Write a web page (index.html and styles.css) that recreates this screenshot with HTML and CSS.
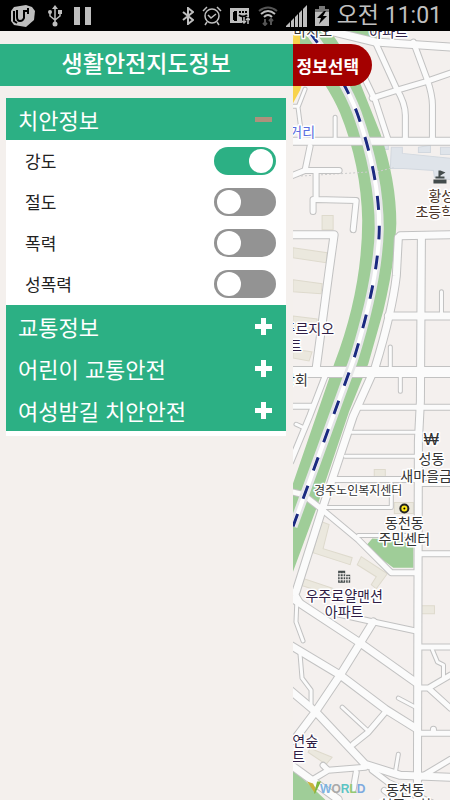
FILE: index.html
```html
<!DOCTYPE html>
<html lang="ko">
<head>
    <meta charset="UTF-8">
    <meta name="viewport" content="width=device-width, initial-scale=1">
    <title>생활안전지도정보</title>
    <link rel="stylesheet" href="styles.css">
</head>
<body>
    <header class="statusbar">
        <div class="status_left">
            <svg width="26" height="22" viewBox="0 0 26 22">
                <path class="fill" d="M4 2 16 0 22 2 25 6 24 15 16 22 4 20 1 16V6Z"/>
                <path class="cut" d="M7 5V12Q7 16 10 16T14 13V6H19M18 3V9M4 6V16L7 18"/>
            </svg>
            <svg width="14" height="22" viewBox="0 0 14 22">
                <path class="thin" d="M7 3V18M2 7V11L7 15L12 11V7"/>
                <path class="fill" d="M7 0 10 4H4ZM10 5H14V9H10Z"/>
                <circle class="fill" cx="2" cy="7" r="2"/>
                <circle class="fill" cx="7" cy="19" r="2.5"/>
            </svg>
            <svg width="18" height="18" viewBox="0 0 18 18">
                <path class="fill" d="M0 0H6V18H0ZM11 0H17V18H11Z"/>
            </svg>
        </div>
        <div class="status_right">
            <svg width="12" height="18" viewBox="0 0 12 18">
                <path class="line" d="M1 5 11 13 6 17V1L11 5 1 13"/>
            </svg>
            <svg width="20" height="20" viewBox="0 0 20 20">
                <circle class="thin" cx="10" cy="10" r="7"/>
                <path class="thin" d="M6 9 9 12 14 8M1 5 5 1M15 1 19 5M5 16 3 19M15 16 17 19"/>
            </svg>
            <svg width="20" height="18" viewBox="0 0 20 18">
                <path class="fill" d="M0 1H19V10H12V16H0Z"/>
                <path class="cut" d="M4 5V13M4 5H6V13H4M9 5H11M12 5H14M15 5H17M9 8Q13 11 17 8"/>
                <path class="thin" d="M14 10V16M12 14 14 16 16 14M18 17V11M16 13 18 11 20 13"/>
            </svg>
            <svg width="20" height="20" viewBox="0 0 20 20">
                <path class="dim" d="M1 5Q10-2 19 5"/>
                <path class="line" d="M3 8Q10 2 17 8M6 11Q10 7 14 11"/>
                <path class="dim" d="M7 13V19M5 17 7 19 9 17M13 19V13M11 15 13 13 15 15"/>
            </svg>
            <svg width="21" height="22" viewBox="0 0 21 22">
                <path class="fill" d="M0 22V21L4 17V22ZM5 22V16L8 13V22ZM9 22V12L12 9V22ZM13 22V8L16 5V22ZM17 22V4L21 0V22Z"/>
            </svg>
            <svg width="14" height="20" viewBox="0 0 14 20">
                <path class="fill" d="M0 3H14V20H0Z"/>
                <path class="charge" d="M4 0H10V3H14V6H0V3H4Z"/>
                <path d="M9 5 2 12H6L4 18 12 10H8L11 5Z"/>
            </svg>
            <span class="clock">오전 11:01</span>
        </div>
    </header>

    <main class="screen">
        <aside class="panel">
            <h1 class="title">생활안전지도정보</h1>
            <div class="accordion">
                <button class="group" type="button" aria-expanded="true">치안정보
                    <svg class="minus" width="17" height="17" viewBox="0 0 17 17"><path d="M0 6H17V11H0Z"/></svg>
                </button>
                <ul class="list">
                    <li class="item"><label for="robbery">강도</label><input class="switch" id="robbery" type="checkbox" checked></li>
                    <li class="item"><label for="theft">절도</label><input class="switch" id="theft" type="checkbox"></li>
                    <li class="item"><label for="violence">폭력</label><input class="switch" id="violence" type="checkbox"></li>
                    <li class="item"><label for="sexual">성폭력</label><input class="switch" id="sexual" type="checkbox"></li>
                </ul>
                <button class="group" type="button" aria-expanded="false">교통정보
                    <svg class="plus" width="17" height="17" viewBox="0 0 17 17"><path d="M6 0H11V6H17V11H11V17H6V11H0V6H6Z"/></svg>
                </button>
                <button class="group" type="button" aria-expanded="false">어린이 교통안전
                    <svg class="plus" width="17" height="17" viewBox="0 0 17 17"><path d="M6 0H11V6H17V11H11V17H6V11H0V6H6Z"/></svg>
                </button>
                <button class="group" type="button" aria-expanded="false">여성밤길 치안안전
                    <svg class="plus" width="17" height="17" viewBox="0 0 17 17"><path d="M6 0H11V6H17V11H11V17H6V11H0V6H6Z"/></svg>
                </button>
            </div>
        </aside>

        <section class="mapview">
            <svg class="map" viewBox="293 31 157 769" preserveAspectRatio="xMinYMin slice">
                <defs>
                    <g id="roads">
                        <!-- north -->
                        <path class="r8" d="M330 31 375 42 450 47M388 315H450M450 234 400 235"/>
                        <path class="r6" d="M375 42 396 88Q405 103 405 115V140M413 42 427 80Q432 95 432 105V140M372 98 397 90 424 82 450 73M362 73 375 100 388 140"/>
                        <path class="r8" d="M293 141H450"/>
                        <path class="r4" d="M305 89 298 107 302 138M290 106H298M335 117V138"/>
                        <path class="r6" d="M310 146 305 170 290 176M305 170H339M316 172V199L356 200 353 229M313 199V211"/>
                        <path class="r8" d="M290 234H334L329 270 316 368"/>
                        <path class="r8" d="M398 237 396 275Q392 310 375 366L353 415 338 460 322 508 296 590"/>
                        <path class="r8" d="M421 236 420 400 418 440 417 800"/>
                        <path class="r4" d="M441 291V312M390 346V368M400 373V390"/>
                        <!-- middle -->
                        <path class="r10" d="M290 371H450"/>
                        <path class="r6" d="M290 405H313M325 375 310 414 291 460M358 406H450M335 478H417M420 482H450M420 552H450"/>
                        <path class="r4" d="M296 423 305 427M352 431H415M345 455H415M326 506H391M391 482V506M358 534H415"/>
                        <path class="r6" d="M290 490 303 493 322 508 358 538 391 571H415"/>
                        <!-- south -->
                        <path class="r4" d="M297 596 296 620 303 639M300 652 302 676 311 688V705M342 705 368 729M398 696 415 705M398 752 395 770M432 648 437 660 443 663V675"/>
                        <path class="r6" d="M294 590 300 600M328 610 373 620 415 629M385 710 368 730 353 742M323 763 328 768 365 765M328 768 313 777M356 770 353 787M372 768 388 780 435 802M384 788 400 800"/>
                        <path class="r8" d="M293 597 360 641 415 680M373 620 340 673 315 710 294 738M290 643 340 673 385 707 417 727M290 688 316 710 365 762 400 773 450 775M290 762 338 797"/>
                        <path class="r6" d="M420 645H450M417 686H428L450 673M428 686 450 706M417 731H450M433 727V731M420 775 450 757"/>
                    </g>
                </defs>

                <rect class="land" x="293" y="31" width="400" height="769"/>

                <!-- buildings -->
                <path class="house" d="M322 215H333V229H322ZM293 247 327 252 326 262 293 257ZM293 279 322 283 321 293 293 291ZM293 315 317 318V328H293ZM293 348 312 351 309 360 293 357Z"/>
                <path class="house" d="M321 520 329 523 323 547 352 556 350 563 313 551ZM361 555 387 572 376 587 371 583 376 575 357 563ZM301 576 337 588 334 594 299 583ZM374 468H385V475H374ZM394 501H413V512H394ZM420 604H434V612H420ZM310 746 332 755 326 762 308 750Z"/>
                <path class="school" d="M391 147H402V153L450 158V179L434 177 433 170 403 168H390ZM375 147 388 144V149H375ZM418 147 430 145V152H418ZM440 147H450V154H440Z"/>
                <path class="yellow" d="M293 31H304L315 45V46L300 90 293 103Z"/>
                <path class="lot" d="M350 31H379V38H350Z"/>

                <!-- green belt along the railway -->
                <path class="green" d="M300 31H330Q352 62 360 83L380 133Q396 180 396 223 395 260 383 310L368 363 349 410 317 505 293 570V482L334 363Q362 290 362 220 361 165 340 113 328 85 300 50Z"/>
                <path class="green" d="M365 545 372 537 405 539 413 545V566H393ZM293 767 328 800H293Z"/>
                <path class="path" d="M293 176 378 171 393 167"/>

                <use href="#roads" class="casing"/>
                <use href="#roads" class="surface"/>

                <path class="railbed" d="M309 31Q345 80 357 113 379 175 379 228 378 280 353 360L293 525"/>
                <path class="rail" d="M309 31Q345 80 357 113 379 175 379 228 378 280 353 360L293 525"/>
                <path class="ties" d="M309 31Q345 80 357 113 379 175 379 228 378 280 353 360L293 525"/>

                <!-- place marks -->
                <path class="mark" d="M433 179H446V183H433ZM435 176H444V178H435ZM438 170H440V177H438ZM440 170 445 172 440 175Z"/>
                <path class="mark" d="M338 569H345V581H338ZM346 573H350V581H346Z"/>
                <path class="windows" d="M340 571V580M343 571V580M338 572H345M338 575H350M338 578H350M348 574V581"/>
                <circle class="spot" cx="404" cy="507" r="4"/>
                <circle cx="404" cy="507" r="1"/>

                <g class="labels">
                    <text x="332" y="36" text-anchor="end">이마시오</text>
                    <text x="369" y="37" class="apt">아파트</text>
                    <text x="315" y="137" text-anchor="end" class="street">네거리</text>
                    <text x="428" y="200" class="brown">황성</text>
                    <text x="415" y="216" class="brown">초등학교</text>
                    <text x="334" y="333" text-anchor="end" class="apt">푸르지오</text>
                    <text x="302" y="350" text-anchor="end" class="apt">아파트</text>
                    <text x="308" y="384" text-anchor="end">상회</text>
                    <text x="431" y="444" text-anchor="middle" class="won">₩</text>
                    <text x="431" y="463" text-anchor="middle">성동</text>
                    <text x="400" y="480">새마을금고</text>
                    <text x="358" y="494" text-anchor="middle" class="small">경주노인복지센터</text>
                    <text x="404" y="526" text-anchor="middle">동천동</text>
                    <text x="404" y="542" text-anchor="middle">주민센터</text>
                    <text x="344" y="599" text-anchor="middle" class="apt">우주로얄맨션</text>
                    <text x="344" y="615" text-anchor="middle" class="apt">아파트</text>
                    <text x="318" y="744" text-anchor="end" class="apt">자연숲</text>
                    <text x="305" y="760" text-anchor="end" class="apt">아파트</text>
                    <text x="405" y="793" text-anchor="middle">동천동</text>
                    <text x="405" y="808" text-anchor="middle">천주교회</text>
                </g>

                <path class="vleft" d="M307 779 313 781 316 787 315 791Z"/>
                <path class="vright" d="M314 791 317 779H321L315 791Z"/>
                <text class="vworld" x="320" y="791">W<tspan class="o">O</tspan><tspan class="r">R</tspan><tspan class="l">L</tspan><tspan class="d">D</tspan></text>
            </svg>
            <button class="select" type="button">정보선택</button>
        </section>
    </main>
</body>
</html>
```
FILE: styles.css
```css
* {
    box-sizing: border-box;
}

body {
    margin: 0;
    min-height: 100vh;
    display: flex;
    flex-direction: column;
    background: #f4f0ed;
    font-family: "Noto Sans CJK KR", sans-serif;
}

button {
    border: 0;
    font-family: inherit;
    cursor: pointer;
}

/* status bar */
.statusbar {
    height: 31px;
    padding: 0 8px 0 10px;
    display: flex;
    justify-content: space-between;
    align-items: center;
    background: #000;
    color: #c0c0c0;
}

.status_left {
    display: flex;
    align-items: center;
    gap: 12px;
}

.status_right {
    display: flex;
    align-items: center;
    gap: 8px;
}

.clock {
    font-family: Roboto, "Noto Sans CJK KR", sans-serif;
    font-size: 23px;
    line-height: 30px;
    white-space: nowrap;
}

.fill {
    fill: #bebebe;
}

.charge {
    fill: #777;
}

.line {
    fill: none;
    stroke: #bebebe;
    stroke-width: 2;
}

.thin {
    fill: none;
    stroke: #bebebe;
    stroke-width: 1.5;
}

.cut {
    fill: none;
    stroke: #000;
    stroke-width: 2;
}

.dim {
    fill: none;
    stroke: #555;
    stroke-width: 2;
}

/* layout */
.screen {
    flex: 1;
    display: flex;
}

.panel {
    width: 65%;
    padding-top: 13px;
}

.mapview {
    flex: 1;
    position: relative;
    padding-top: 13px;
    overflow: hidden;
}

/* left panel */
.title {
    margin: 0;
    height: 42px;
    background: #2cb084;
    color: #fff;
    font-size: 23px;
    font-weight: 500;
    line-height: 36px;
    text-align: center;
}

.accordion {
    margin: 12px 7px 0 6px;
    padding-bottom: 5px;
    background: #fff;
}

.group {
    width: 100%;
    height: 42px;
    padding: 0 14px 0 12px;
    display: flex;
    justify-content: space-between;
    align-items: center;
    background: #2cb084;
    color: #fff;
    font-size: 22px;
    line-height: 42px;
}

.plus {
    fill: #fff;
}

.minus {
    fill: #ad917c;
}

.list {
    margin: 0;
    padding: 0 0 1px;
    list-style: none;
}

.item {
    height: 41px;
    padding: 0 10px 0 19px;
    display: flex;
    justify-content: space-between;
    align-items: center;
    color: #222;
    font-size: 17px;
}

.switch {
    appearance: none;
    margin: 0;
    width: 62px;
    height: 28px;
    padding: 2px 3px;
    display: flex;
    border-radius: 14px;
    background: #939393;
}

.switch::before {
    content: "";
    width: 24px;
    height: 24px;
    border-radius: 50%;
    background: #fff;
}

.switch:checked {
    justify-content: flex-end;
    background: #2cb084;
}

/* the button floats on the map */
.select {
    position: relative;
    width: 79px;
    height: 42px;
    padding: 0 10px 0 4px;
    border-radius: 0 21px 21px 0;
    background: #a40000;
    color: #fff;
    font-size: 17px;
    font-weight: 700;
    text-align: left;
}

/* map */
.map {
    position: absolute;
    top: 0;
    left: 0;
    width: 100%;
    height: 100%;
}

.land {
    fill: #f4f0ee;
}

.house {
    fill: #ebe8de;
    stroke: #dedacd;
}

.school {
    fill: #dfe4ea;
    stroke: #d2d8df;
}

.yellow {
    fill: #f8d34c;
}

.green,
.lot {
    fill: #9fcd98;
}

.path {
    fill: none;
    stroke: #ccc;
    stroke-dasharray: 2 2;
}

.casing {
    --edge: 2px;
    stroke: #c2c2c2;
}

.surface {
    --edge: 0px;
    stroke: #fbfbfb;
}

.r4,
.r6,
.r8,
.r10 {
    fill: none;
    stroke-linecap: round;
    stroke-linejoin: round;
}

.r4 {
    stroke-width: calc(3px + var(--edge));
}

.r6 {
    stroke-width: calc(5px + var(--edge));
}

.r8 {
    stroke-width: calc(7px + var(--edge));
}

.r10 {
    stroke-width: calc(10px + var(--edge));
}

.railbed {
    fill: none;
    stroke: #e6e6e8;
    stroke-width: 9;
}

.rail {
    fill: none;
    stroke: #fff;
    stroke-width: 4;
}

.ties {
    fill: none;
    stroke: #1b2a80;
    stroke-width: 3;
    stroke-dasharray: 14 16;
}

.mark {
    fill: #444c4c;
}

.windows {
    stroke: #f4f0ee;
    stroke-width: 1;
}

.spot {
    fill: #ffe81a;
    stroke: #222;
    stroke-width: 2;
}

.labels {
    font-size: 14px;
    fill: #333;
    stroke: #fff;
    stroke-width: 3;
    stroke-linejoin: round;
    paint-order: stroke;
}

.apt {
    fill: #2f1d45;
}

.street {
    fill: #5b6fe0;
}

.brown {
    fill: #4a3428;
}

.small {
    font-size: 12px;
}

.won {
    font-family: "Liberation Sans", sans-serif;
    font-size: 16px;
}

.vworld {
    font-family: "Liberation Sans", sans-serif;
    font-size: 12px;
    font-weight: 700;
    fill: #7fb2e0;
}

.o {
    fill: #a9a9a9;
}

.r {
    fill: #5cc4c4;
}

.l {
    fill: #94c973;
}

.d {
    fill: #7faadf;
}

.vleft {
    fill: #c8b43c;
}

.vright {
    fill: #7db93f;
}
```
